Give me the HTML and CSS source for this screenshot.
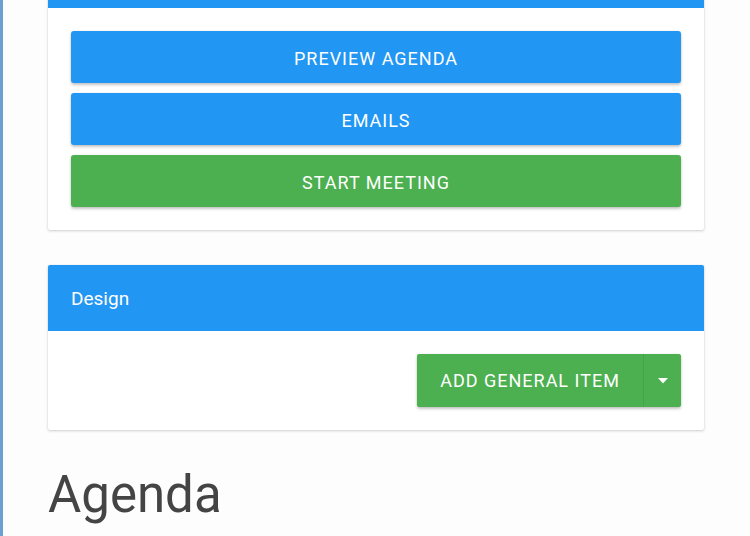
FILE: index.html
```html
<!DOCTYPE html>
<html>
<head>
<meta charset="utf-8">
<link rel="stylesheet" href="styles.css">
</head>
<body>
<div class="frame">
  <div class="content">
    <section class="card card-top">
      <div class="card-header"></div>
      <div class="card-body stack">
        <button class="btn btn-blue">PREVIEW AGENDA</button>
        <button class="btn btn-blue">EMAILS</button>
        <button class="btn btn-green">START MEETING</button>
      </div>
    </section>
    <section class="card">
      <div class="card-header">Design</div>
      <div class="card-body actions">
        <div class="split">
          <button class="split-main">ADD GENERAL ITEM</button>
          <button class="split-caret" aria-label="more">
            <svg width="10" height="6" viewBox="0 0 10 6"><path d="M0 0h10L5 5.5z" fill="#fff"/></svg>
          </button>
        </div>
      </div>
    </section>
    <h1 class="title">Agenda</h1>
  </div>
</div>
</body>
</html>
```
FILE: styles.css
```css
html, body {
  margin: 0;
  padding: 0;
  height: 100%;
  overflow: hidden;
}
body {
  background: #fdfdfd;
  font-family: Roboto, "Liberation Sans", Arial, sans-serif;
}
.frame {
  display: flow-root;
  height: 536px;
  border-left: 3px solid #6b9fcf;
  box-sizing: border-box;
}
.content {
  width: 656px;
  margin-left: 45px;
  margin-top: -58px;
  display: flex;
  flex-direction: column;
  gap: 35px;
}
.card {
  background: #fff;
  border-radius: 2px;
  box-shadow: 0 1px 3px rgba(0,0,0,0.18), 0 0 1px rgba(0,0,0,0.12);
}
.card-header {
  background: #2196f3;
  color: #fff;
  height: 66px;
  box-sizing: border-box;
  padding-left: 23px;
  display: flex;
  align-items: center;
  font-size: 19px;
  border-radius: 2px 2px 0 0;
}
.card-body {
  padding: 23px;
}
.stack {
  display: flex;
  flex-direction: column;
  gap: 10px;
}
.btn {
  height: 52px;
  border: none;
  border-radius: 3px;
  color: #fff;
  font-family: Roboto, "Liberation Sans", Arial, sans-serif;
  font-size: 18px;
  letter-spacing: 1px;
  box-shadow: 0 2px 3px rgba(0,0,0,0.22), 0 0 2px rgba(0,0,0,0.1);
  padding: 2px 0 0;
}
.btn-blue { background: #2196f3; }
.btn-green { background: #4caf50; }
.actions {
  display: flex;
  justify-content: flex-end;
}
.split {
  display: flex;
  height: 53px;
  border-radius: 3px;
  background: #4caf50;
  box-shadow: 0 2px 3px rgba(0,0,0,0.22), 0 0 2px rgba(0,0,0,0.1);
  overflow: hidden;
}
.split button {
  background: #4caf50;
  border: none;
  color: #fff;
  font-family: Roboto, "Liberation Sans", Arial, sans-serif;
  font-size: 18px;
  letter-spacing: 1px;
  padding: 0;
}
.split-main {
  width: 227px;
  border-right: 1px solid #45a349 !important;
}
.split-caret {
  width: 37px;
  display: flex;
  align-items: center;
  justify-content: center;
}
.title {
  margin: 0;
  font-weight: 400;
  font-size: 51px;
  color: #444;
  line-height: 56px;
  margin-top: 2px;
  padding-left: 0;
}
```
